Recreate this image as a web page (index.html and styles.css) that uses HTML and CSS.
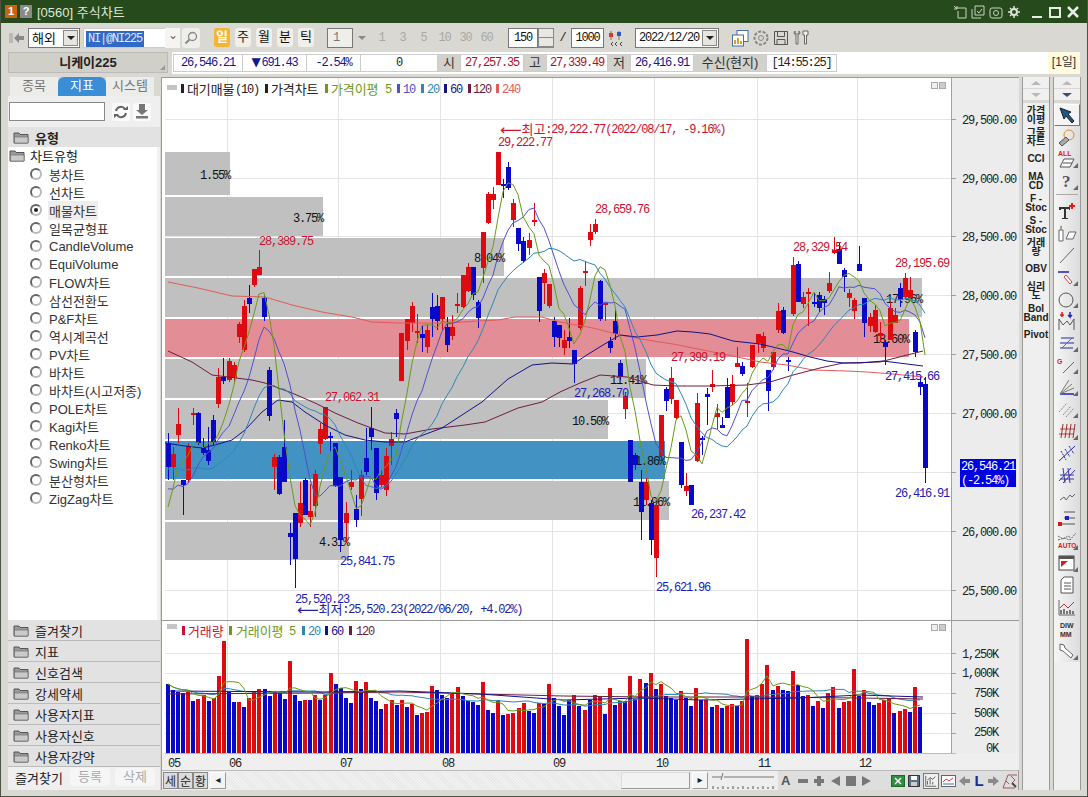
FILE: index.html
```html
<!DOCTYPE html>
<html lang="ko">
<head>
    <meta charset="UTF-8">
    <title>[0560] 주식차트</title>
    <link rel="stylesheet" href="styles.css">
</head>
<body>
    <svg class="defs" width="0" height="0">
        <symbol id="folder" viewBox="0 0 16 13">
            <path d="M1 2h5l1 1.5h8V12H1z" fill="#9a9a9a" stroke="#555"/>
            <path d="M1.5 6h13.5V12H1.500z" fill="#c9c9c9" stroke="#666" stroke-width=".6"/>
        </symbol>
    </svg>

    <div class="window">
        <div class="titlebar">
            <span class="badge badge-num">1</span>
            <span class="badge badge-help">?</span>
            <span class="title-text">[0560] 주식차트</span>
            <div class="title-icons">
                <svg width="14" height="14" viewBox="0 0 14 14"><path d="M3 3h10v10H5V6M1 1l3 3M4 1v3H1" fill="none" stroke="#c9d4c4"/></svg>
                <svg width="14" height="14" viewBox="0 0 14 14"><path d="M4 1h9v9H4zM1 4v9h9M6 6l2 2 3-4" fill="none" stroke="#c9d4c4"/></svg>
                <svg width="14" height="14" viewBox="0 0 14 14"><rect x="1" y="3" width="12" height="10" rx="2" fill="none" stroke="#c9d4c4"/><circle cx="7" cy="8" r="2.500" fill="none" stroke="#c9d4c4"/></svg>
                <svg width="14" height="14" viewBox="0 0 14 14"><circle cx="7" cy="7" r="3" fill="none" stroke="#dfe6da" stroke-width="2"/><path d="M7 1v2M7 11v2M1 7h2M11 7h2M3 3l1 1M10 10l1 1M11 3l-1 1M3 11l1-1" stroke="#dfe6da" stroke-width="1.500"/></svg>
                <span class="win-btns">
                    <svg width="14" height="14" viewBox="0 0 14 14"><path d="M2 12h10" stroke="#e8ede4" stroke-width="2"/></svg>
                    <svg width="14" height="14" viewBox="0 0 14 14"><path d="M2 3h10v9H2z" fill="none" stroke="#e8ede4" stroke-width="2"/></svg>
                    <svg width="14" height="14" viewBox="0 0 14 14"><path d="M2 2l10 10M12 2L2 12" stroke="#e8ede4" stroke-width="2.500"/></svg>
                </span>
            </div>
        </div>

        <div class="toolbar">
            <svg class="back" width="16" height="16" viewBox="0 0 16 16"><path d="M1 3v10M3 3v10" stroke="#999"/><path d="M5 8l5-5v3h5v4h-5v3z" fill="#888"/></svg>
            <div class="combo combo-market"><span>해외</span><i class="drop"></i></div>
            <div class="symbol"><span class="selected num">NI|@NI225</span></div>
            <div class="symbol-arrow">⌄</div>
            <div class="flat-btn search">
                <svg width="14" height="14" viewBox="0 0 14 14"><circle cx="8.500" cy="5.500" r="4" fill="none" stroke="#888" stroke-width="1.300"/><path d="M5.500 8.500L1.500 12.500" stroke="#888" stroke-width="2"/></svg>
            </div>
            <div class="periods">
                <span class="period on">일</span>
                <span class="period">주</span>
                <span class="period">월</span>
                <span class="period">분</span>
                <span class="period">틱</span>
            </div>
            <div class="spin-box num">1</div>
            <div class="spin-arrow"></div>
            <div class="minutes num">
                <span>1</span><span>3</span><span>5</span><span>10</span><span>30</span><span>60</span>
            </div>
            <div class="count-box num">150</div>
            <div class="count-spin"><i></i><i></i></div>
            <div class="slash num">/</div>
            <div class="total-box num">1000</div>
            <svg class="tb-icon" width="16" height="18" viewBox="0 0 16 18"><path d="M4 2v9M12 2v9" stroke="#777"/><rect x="2" y="4" width="4" height="4" fill="#d63a2a"/><rect x="10" y="3" width="4" height="4" fill="#2f55c8"/><path d="M6 13l-2 2 2 2M10 13l-2 2 2 2M15 13l-2 2 2 2" fill="none" stroke="#444"/></svg>
            <div class="combo combo-date"><span class="num">2022/12/20</span><i class="drop"></i></div>
            <svg class="tb-icon first" width="18" height="18" viewBox="0 0 18 18"><rect x="6" y="1.500" width="11" height="11" fill="#fff" stroke="#4a6fa0"/><rect x="1.500" y="6" width="11" height="11" fill="#fff" stroke="#4a6fa0"/><path d="M4 15v-4M7 15v-6M10 15v-3" stroke-width="2" stroke="#e0a020"/></svg>
            <svg class="tb-icon" width="18" height="18" viewBox="0 0 18 18"><circle cx="9" cy="9" r="6.500" fill="none" stroke="#888" stroke-width="2" stroke-dasharray="3 1.500"/><circle cx="9" cy="9" r="2.500" fill="none" stroke="#888"/></svg>
            <svg class="tb-icon" width="16" height="18" viewBox="0 0 16 18"><path d="M1.500 2.500h13v13h-13zM4.500 2.500v5h7v-5M4 15.500v-5h8v5" fill="none" stroke="#555"/></svg>
            <svg class="tb-icon" width="18" height="18" viewBox="0 0 18 18"><path d="M3 2c-2 2 0 4 1 4v9h2V6c1 0 3-2 1-4v3H3zM11 2h5v4h-1.500v9h-2V6H11z" fill="#eee" stroke="#666"/></svg>
        </div>

        <div class="infobar">
            <div class="stock-name">니케이225<i class="grip"></i></div>
            <div class="quote">
                <span class="cell num blue w-price">26,546.21</span>
                <span class="cell num blue w-diff"><b>▼</b>691.43</span>
                <span class="cell num blue w-rate">-2.54%</span>
                <span class="cell num w-vol">0</span>
                <span class="cell label w-lab">시</span>
                <span class="cell num red w-ohl">27,257.35</span>
                <span class="cell label w-lab">고</span>
                <span class="cell num red w-ohl2">27,339.49</span>
                <span class="cell label w-lab">저</span>
                <span class="cell num blue w-ohl">26,416.91</span>
                <span class="cell label w-src">수신(현지)</span>
                <span class="cell num w-time">[14:55:25]</span>
                <span class="cycle">[1일]</span>
            </div>
        </div>

        <div class="main">
            <aside class="side">
                <div class="tabs">
                    <span class="tab">종목</span>
                    <span class="tab on">지표</span>
                    <span class="tab">시스템</span>
                </div>
                <div class="search-row">
                    <div class="search-input"></div>
                    <div class="flat-btn icon-btn">
                        <svg width="16" height="14" viewBox="0 0 16 14"><path d="M3 6a5 5 0 0 1 9-2" fill="none" stroke="#666" stroke-width="2"/><path d="M13 8a5 5 0 0 1-9 2" fill="none" stroke="#666" stroke-width="2"/><path d="M10 5h5V1zM6 9H1v4z" fill="#666"/></svg>
                    </div>
                    <div class="flat-btn icon-btn">
                        <svg width="14" height="15" viewBox="0 0 14 15"><path d="M4 0h6v6h3l-6 5-6-5h3zM1 12h12v2.500H1z" fill="#777"/></svg>
                    </div>
                </div>
                <div class="group-head open"><svg width="16" height="13"><use href="#folder"/></svg><b>유형</b></div>
                <div class="tree">
                    <div class="tree-root"><svg width="16" height="13"><use href="#folder"/></svg>차트유형</div>
                    <div class="item"><i class="radio"></i><span>봉차트</span></div>
                    <div class="item"><i class="radio"></i><span>선차트</span></div>
                    <div class="item active"><i class="radio"></i><span>매물차트</span></div>
                    <div class="item"><i class="radio"></i><span>일목균형표</span></div>
                    <div class="item"><i class="radio"></i><span>CandleVolume</span></div>
                    <div class="item"><i class="radio"></i><span>EquiVolume</span></div>
                    <div class="item"><i class="radio"></i><span>FLOW차트</span></div>
                    <div class="item"><i class="radio"></i><span>삼선전환도</span></div>
                    <div class="item"><i class="radio"></i><span>P&amp;F차트</span></div>
                    <div class="item"><i class="radio"></i><span>역시계곡선</span></div>
                    <div class="item"><i class="radio"></i><span>PV차트</span></div>
                    <div class="item"><i class="radio"></i><span>바차트</span></div>
                    <div class="item"><i class="radio"></i><span>바차트(시고저종)</span></div>
                    <div class="item"><i class="radio"></i><span>POLE차트</span></div>
                    <div class="item"><i class="radio"></i><span>Kagi차트</span></div>
                    <div class="item"><i class="radio"></i><span>Renko차트</span></div>
                    <div class="item"><i class="radio"></i><span>Swing차트</span></div>
                    <div class="item"><i class="radio"></i><span>분산형차트</span></div>
                    <div class="item"><i class="radio"></i><span>ZigZag차트</span></div>
                </div>
                <div class="group-head"><svg width="16" height="13"><use href="#folder"/></svg>즐겨찾기</div>
                <div class="group-head"><svg width="16" height="13"><use href="#folder"/></svg>지표</div>
                <div class="group-head"><svg width="16" height="13"><use href="#folder"/></svg>신호검색</div>
                <div class="group-head"><svg width="16" height="13"><use href="#folder"/></svg>강세약세</div>
                <div class="group-head"><svg width="16" height="13"><use href="#folder"/></svg>사용자지표</div>
                <div class="group-head"><svg width="16" height="13"><use href="#folder"/></svg>사용자신호</div>
                <div class="group-head"><svg width="16" height="13"><use href="#folder"/></svg>사용자강약</div>
                <div class="side-foot">
                    <span class="foot-title">즐겨찾기</span>
                    <span class="foot-btn">등록</span>
                    <span class="foot-btn">삭제</span>
                </div>
            </aside>

            <section class="chart-frame">
                <svg id="price" class="pane" width="857" height="542" viewBox="162 78 857 542"></svg>
                <svg id="volume" class="pane" width="857" height="150" viewBox="162 620 857 150"></svg>
                <div class="chart-foot">
                    <span class="mini-tab">세</span><span class="mini-tab">순</span><span class="mini-tab">황</span>
                    <span class="arrow-btn">◂</span>
                    <div class="scroll-track"><div class="scroll-thumb"></div></div>
                    <span class="arrow-btn">▸</span>
                    <svg class="zoom-slider" width="64" height="18" viewBox="0 0 64 18">
                        <path d="M0 5h10M12 5h50" stroke="#777"/><path d="M11 1l-2 7" stroke="#777"/>
                        <path d="M1 17v-3M6 17v-2M11 17v-3M16 17v-2M21 17v-3M26 17v-2M31 17v-3M36 17v-2M41 17v-3M46 17v-2M51 17v-3M56 17v-2M61 17v-3" stroke="#555"/>
                    </svg>
                    <div class="foot-tools">
                        <span class="ft-a">A</span>
                        <svg width="12" height="14" viewBox="0 0 12 14"><rect x="1" y="5" width="10" height="4" fill="#777"/></svg>
                        <svg width="12" height="14" viewBox="0 0 12 14"><path d="M4 2h4v3h3v4H8v3H4V9H1V5h3z" fill="#777"/></svg>
                        <svg width="12" height="14" viewBox="0 0 12 14"><path d="M11 2v10L2 7z" fill="#777"/></svg>
                        <svg width="12" height="14" viewBox="0 0 12 14"><rect x="1" y="2" width="10" height="10" fill="#777"/></svg>
                        <svg width="12" height="14" viewBox="0 0 12 14"><path d="M1 2v10l9-5z" fill="#777"/></svg>
                        <div class="foot-views">
                            <svg width="14" height="14" viewBox="0 0 14 14"><rect x=".5" y="1.500" width="13" height="11" fill="#2f8f3f" stroke="#1c6a2a"/><path d="M4 4l6 6M10 4l-6 6" stroke="#fff" stroke-width="1.500"/></svg>
                            <svg width="14" height="14" viewBox="0 0 14 14"><path d="M1.500 1.500h11v11h-11z" fill="#5a6e8c" stroke="#333"/><rect x="4" y="2" width="6" height="4" fill="#fff"/><rect x="4" y="8" width="6" height="4" fill="#ccc"/></svg>
                            <svg class="boxed" width="16" height="16" viewBox="0 0 16 16"><path d="M2 2v12h12M4 12V8M7 12V5M10 12V9M4 7l3-3 3 2 3-3" fill="none" stroke="#555"/></svg>
                            <svg width="15" height="14" viewBox="0 0 15 14"><rect x=".5" y="1.500" width="14" height="11" fill="#fff" stroke="#666"/><path d="M2 8l3-3 3 2 4-3" fill="none" stroke="#c44"/><path d="M2 10h11" stroke="#4466bb"/></svg>
                            <svg width="13" height="14" viewBox="0 0 13 14"><path d="M7 2v3h5v4H7v3L1 7z" fill="#8a8a8a"/></svg>
                            <span class="ft-l">L</span>
                            <svg width="13" height="14" viewBox="0 0 13 14"><path d="M6 2v3H1v4h5v3l6-5z" fill="#8a8a8a"/></svg>
                            <svg width="16" height="16" viewBox="0 0 16 16"><path d="M1 15L6 2h9M1 15h12M9 3l4 4-3 3M4 8l3 3" fill="none" stroke="#a55"/><path d="M10 10l4 4" stroke="#444" stroke-width="2"/></svg>
                        </div>
                    </div>
                </div>
            </section>

            <div class="tool-col col-names">
                <div class="updown"><i class="up"></i><i class="down"></i></div>
                <div class="names">
                    <span>가격<br>이평</span>
                    <span>그물<br>차트</span>
                    <span>CCI</span>
                    <span>MA<br>CD</span>
                    <span>F -<br>Stoc</span>
                    <span>S -<br>Stoc</span>
                    <span>거래<br>량</span>
                    <span>OBV</span>
                    <span>심리<br>도</span>
                    <span>Bol<br>Band</span>
                    <span>Pivot</span>
                </div>
            </div>

            <div class="tool-col col-draw">
                <div class="updown"><i class="up"></i><i class="down dark"></i></div>
                <div class="tools">
                    <div class="tool selected"><svg width="20" height="20" viewBox="0 0 20 20"><path d="M3 3l11 4-3 2 6 7-2 2-6-7-2 3z" fill="#26527c" stroke="#123"/></svg></div>
                    <div class="tool"><svg width="20" height="20" viewBox="0 0 20 20"><circle cx="12" cy="8" r="5" fill="none" stroke="#e08a30"/><path d="M2 16l7-6 3 3-7 6z" fill="#aaa" stroke="#555"/></svg></div>
                    <div class="tool more"><svg width="20" height="20" viewBox="0 0 20 20"><text x="1" y="7" class="ico-txt red">ALL</text><path d="M3 18l4-8h10l-4 8zM6 14h9" fill="#fff" stroke="#555"/></svg></div>
                    <div class="tool more"><svg width="20" height="20" viewBox="0 0 20 20"><text x="5" y="16" class="ico-q">?</text></svg></div>
                    <div class="tool-sep"></div>
                    <div class="tool"><svg width="20" height="20" viewBox="0 0 20 20"><path d="M2 6h11v3h-1V8H9v9h2v1H5v-1h2V8H4v1H2z" fill="#333"/><path d="M12 5h6M15 2v6" stroke="#e01818" stroke-width="2"/></svg></div>
                    <div class="tool"><svg width="20" height="20" viewBox="0 0 20 20"><path d="M2 7h4v11H2zM4 7V3M9 16l3-7h7l-3 7z" fill="#fff" stroke="#666"/><path d="M3 5l1-3 1 3" fill="#d98a3a"/></svg></div>
                    <div class="tool"><svg width="20" height="20" viewBox="0 0 20 20"><path d="M3 18L17 3" stroke="#666"/></svg></div>
                    <div class="tool more"><svg width="20" height="20" viewBox="0 0 20 20"><path d="M1 5h11" stroke="#2020b0" stroke-width="1.500"/><path d="M9 8l6 7-2 2-6-7z" fill="#fff" stroke="#c44"/></svg></div>
                    <div class="tool more"><svg width="20" height="20" viewBox="0 0 20 20"><circle cx="9" cy="11" r="7" fill="none" stroke="#555"/></svg></div>
                    <div class="tool"><svg width="20" height="20" viewBox="0 0 20 20"><path d="M2 19V8l4 6 4-4 3 4 4-6v11" fill="none" stroke="#555"/><path d="M5 1v5M3 4h4" stroke="#e01818" stroke-width="1.500"/><path d="M13 1v5l-2-2M13 6l2-2" fill="none" stroke="#2020c8" stroke-width="1.500"/></svg></div>
                    <div class="tool more"><svg width="20" height="20" viewBox="0 0 20 20"><path d="M4 5h13M3 15h13M3 10h14" stroke="#2828a8"/><path d="M5 15L15 5" stroke="#c44"/></svg></div>
                    <div class="tool more"><svg width="20" height="20" viewBox="0 0 20 20"><text x="0" y="9" class="ico-txt red">G</text><path d="M6 18L17 7" stroke="#666"/></svg></div>
                    <div class="tool more"><svg width="20" height="20" viewBox="0 0 20 20"><path d="M3 17h14" stroke="#2020b0" stroke-width="1.500"/><path d="M3 17L12 3M3 17L15 7M3 17L17 11" stroke="#777"/></svg></div>
                    <div class="tool more"><svg width="20" height="20" viewBox="0 0 20 20"><path d="M2 13L10 4M6 16l8-9M9 18l8-9" stroke="#888" stroke-dasharray="2 1"/></svg></div>
                    <div class="tool more"><svg width="20" height="20" viewBox="0 0 20 20"><path d="M3 8h15M2 13h15" stroke="#c04040"/><path d="M4 17L6 3M8 17l2-14M12 17l2-14M16 17l2-14" stroke="#a03030"/></svg></div>
                    <div class="tool"><svg width="20" height="20" viewBox="0 0 20 20"><path d="M2 18L18 3" stroke="#2828a8"/><path d="M4 8l5 9M8 6l5 8M12 3l5 8" stroke="#2828a8" stroke-dasharray="2 1"/></svg></div>
                    <div class="tool"><svg width="20" height="20" viewBox="0 0 20 20"><path d="M2 16L14 3M6 18L18 5M3 10h14M3 14h14M6 3l2 15M11 3l2 15" stroke="#3838a8" fill="none"/></svg></div>
                    <div class="tool"><svg width="20" height="20" viewBox="0 0 20 20"><path d="M3 13l4-3 2 3 4-5 2 2 3-3" fill="none" stroke="#666"/></svg></div>
                    <div class="tool"><svg width="20" height="20" viewBox="0 0 20 20"><path d="M7 3h11M7 9h11M2 15h16" stroke="#555"/><rect x="8" y="7" width="4" height="4" fill="#2020c8"/><rect x="1" y="13" width="4" height="4" fill="#d81818"/></svg></div>
                    <div class="tool more"><svg width="20" height="20" viewBox="0 0 20 20"><path d="M1 9l6-2 6 2 6-7M1 5l5 3 5-3 3 2" fill="none" stroke="#666" stroke-dasharray="2 1"/><text x="1" y="17" class="ico-auto">AUTO</text></svg></div>
                    <div class="tool more"><svg width="20" height="20" viewBox="0 0 20 20"><rect x="2" y="3" width="15" height="14" fill="#fff" stroke="#444"/><rect x="2" y="3" width="15" height="3" fill="#555"/><path d="M4 8h7l-7 6z" fill="#e01818"/></svg></div>
                    <div class="tool"><svg width="20" height="20" viewBox="0 0 20 20"><path d="M4 5l3-3h9v16H4zM7 8h7M7 11h7M7 14h7" fill="#fff" stroke="#555"/></svg></div>
                    <div class="tool"><svg width="20" height="20" viewBox="0 0 20 20"><path d="M2 3v15h16" fill="none" stroke="#666"/><path d="M4 17v-4M7 17v-5M10 17v-3M13 17v-4M16 17v-3" stroke="#777" stroke-width="2"/><path d="M3 11l4-4 4 4 6-6" fill="none" stroke="#c03030"/></svg></div>
                    <div class="tool"><svg width="20" height="20" viewBox="0 0 20 20"><text x="3" y="9" class="ico-txt dark">DIW</text><text x="3" y="18" class="ico-txt dark">MM</text></svg></div>
                    <div class="tool more"><svg width="20" height="20" viewBox="0 0 20 20"><path d="M3 3l4 1 1 3 8 7-2 3-8-7-3-1z" fill="#fff" stroke="#666"/></svg></div>
                </div>
            </div>
        </div>
    </div>

    <script src="chart.js"></script>
</body>
</html>
```
FILE: styles.css
```css
* { box-sizing: border-box; }

html, body {
    margin: 0;
    padding: 0;
    background: #d9d8d2;
}

body {
    font-family: "Liberation Sans", "Noto Sans CJK KR", sans-serif;
    font-size: 12px;
    color: #222;
}

i { font-style: normal; }
.defs { position: absolute; }

.num {
    font-family: "Liberation Mono", "Noto Sans CJK KR", monospace;
    font-size: 12px;
    letter-spacing: -1.2px;
}
.blue { color: #14148c; }
.red { color: #a8102c; }

.window {
    width: 1088px;
    height: 797px;
    overflow: hidden;
    border: 1px solid #4a5548;
    border-top: 0;
    background: #d9d8d2;
    display: flex;
    flex-direction: column;
}

/* title bar */
.titlebar {
    height: 23px;
    flex: none;
    display: flex;
    align-items: center;
    padding-left: 4px;
    background: #264a1c;
    color: #e8ece4;
}
.badge {
    width: 12px;
    height: 13px;
    margin-right: 3px;
    font: bold 11px "Liberation Sans", sans-serif;
    text-align: center;
    line-height: 13px;
    color: #fff;
}
.badge-num { background: #c8640a; }
.badge-help { background: #8a8a8a; }
.title-text {
    margin-left: 2px;
    font-size: 13px;
    color: #dfe6da;
}
.title-icons {
    margin-left: auto;
    display: flex;
    align-items: center;
    gap: 4px;
    padding-right: 7px;
}
.win-btns {
    display: flex;
    gap: 4px;
    margin-left: 5px;
}

/* toolbar */
.toolbar {
    height: 29px;
    flex: none;
    display: flex;
    align-items: center;
    padding-left: 8px;
    font-size: 12px;
}
.combo {
    height: 20px;
    display: flex;
    align-items: center;
    justify-content: space-between;
    background: #fff;
    border: 1px solid #777;
    padding-left: 3px;
    font-size: 13px;
    color: #111;
}
.combo-market { width: 52px; margin-left: 3px; }
.combo-date { width: 84px; margin-left: 12px; }
.drop {
    width: 15px;
    height: 16px;
    margin-right: 1px;
    background: #e6e5df;
    border: 1px solid #888;
    display: flex;
    align-items: center;
    justify-content: center;
}
.drop::after {
    content: "";
    border: 4px solid transparent;
    border-top: 4px solid #222;
    border-bottom: 0;
}
.symbol {
    width: 82px;
    height: 20px;
    margin-left: 3px;
    background: #fff;
    border: 1px solid #ccc;
    border-right: 0;
    padding: 2px 0 0 2px;
}
.selected {
    background: #3169c6;
    color: #dfe8ff;
    padding: 1px 2px;
}
.symbol-arrow {
    width: 15px;
    height: 20px;
    background: #f4f4f2;
    color: #666;
    text-align: center;
    line-height: 14px;
}
.flat-btn {
    display: flex;
    align-items: center;
    justify-content: center;
    background: #eeeeea;
    border-radius: 3px;
}
.search { width: 18px; height: 20px; margin-left: 2px; }
.periods {
    display: flex;
    gap: 5px;
    margin-left: 14px;
}
.period {
    width: 16px;
    height: 19px;
    border-radius: 3px;
    background: #f0efea;
    text-align: center;
    font-size: 13px;
    line-height: 18px;
    color: #111;
}
.period.on {
    background: #f5b52e;
    color: #fff;
    font-weight: bold;
}
.spin-box {
    width: 26px;
    height: 20px;
    margin-left: 13px;
    background: #efefe9;
    border: 1px solid #777;
    padding-left: 5px;
    line-height: 18px;
    color: #777;
}
.spin-arrow {
    width: 14px;
    height: 20px;
    margin-left: 2px;
    display: flex;
    align-items: center;
    justify-content: center;
}
.spin-arrow::after {
    content: "";
    border: 4px solid transparent;
    border-top: 4px solid #888;
    border-bottom: 0;
}
.minutes {
    display: flex;
    margin-left: 2px;
    color: #a9a9a4;
}
.minutes span {
    width: 21px;
    text-align: center;
}
.count-box, .total-box {
    height: 20px;
    background: #fff;
    border: 1px solid #777;
    text-align: center;
    line-height: 18px;
    color: #111;
}
.count-box { width: 30px; margin-left: 11px; }
.total-box { width: 33px; }
.count-spin {
    width: 16px;
    height: 20px;
    display: flex;
    flex-direction: column;
    border: 1px solid #888;
}
.count-spin i {
    flex: 1;
    background: #e8e7e1;
    border-bottom: 1px solid #888;
}
.slash {
    width: 17px;
    text-align: center;
}
.tb-icon { margin-left: 3px; flex: none; }
.tb-icon.first { margin-left: 12px; }
.back { flex: none; }

/* quote strip */
.infobar {
    height: 25px;
    flex: none;
    display: flex;
    padding-left: 7px;
    padding-right: 7px;
}
.stock-name {
    width: 160px;
    height: 21px;
    background: #d0cfc8;
    border: 1px solid #bbb;
    font-weight: bold;
    font-size: 13px;
    text-align: center;
    line-height: 19px;
    position: relative;
}
.grip {
    position: absolute;
    right: 2px;
    bottom: 2px;
    border-left: 5px solid transparent;
    border-bottom: 5px solid #999;
}
.quote {
    flex: 1;
    margin-left: 4px;
    height: 22px;
    background: #fff;
    display: flex;
    align-items: center;
    padding-left: 1px;
}
.cell {
    height: 18px;
    border: 1px solid #ccc;
    border-left: 0;
    text-align: center;
    line-height: 16px;
    background: #fff;
}
.cell:first-child { border-left: 1px solid #ccc; }
.cell b {
    font: normal 12px "DejaVu Sans", sans-serif;
    letter-spacing: 0;
    margin-right: 1px;
}
.cell.label {
    background: #d2d1cb;
    font-size: 13px;
    color: #333;
}
.w-price { width: 70px; }
.w-diff { width: 64px; }
.w-rate { width: 54px; }
.w-vol { width: 77px; }
.w-lab { width: 23px; }
.w-ohl { width: 63px; }
.w-ohl2 { width: 61px; }
.w-src { width: 73px; }
.w-time { width: 70px; }
.cycle {
    margin-left: auto;
    width: 32px;
    height: 22px;
    background: #fffbe0;
    text-align: center;
    line-height: 20px;
    color: #333;
}

/* body of the window */
.main {
    flex: 1;
    min-height: 0;
    display: flex;
    padding: 0 0 6px 7px;
}

/* left panel */
.side {
    width: 152px;
    flex: none;
    display: flex;
    flex-direction: column;
}
.tabs {
    display: flex;
    height: 19px;
    padding-left: 2px;
}
.tab {
    width: 48px;
    text-align: center;
    line-height: 18px;
    background: #ececea;
    color: #777;
    font-size: 13px;
}
.tab.on {
    background: #3a8ed8;
    color: #fff;
    border-radius: 6px 6px 0 0;
}
.search-row {
    height: 31px;
    display: flex;
    align-items: center;
    padding-left: 1px;
    background: #efefef;
}
.search-input {
    width: 96px;
    height: 19px;
    background: #fff;
    border: 1px solid #888;
}
.icon-btn {
    width: 18px;
    height: 18px;
    margin-left: 7px;
    background: #fafafa;
}
.icon-btn + .icon-btn { margin-left: 3px; }
.group-head {
    height: 21px;
    flex: none;
    display: flex;
    align-items: center;
    gap: 6px;
    padding-left: 5px;
    background: #e2e2e2;
    border-bottom: 1px solid #bbb;
    font-size: 13px;
}
.group-head.open { height: 20px; border-bottom: 0; }
.tree {
    flex: 1;
    min-height: 0;
    padding-left: 1px;
    background: #fff;
    border-right: 3px solid #f2f2f2;
}
.tree-root {
    height: 18px;
    display: flex;
    align-items: center;
    gap: 5px;
    font-size: 13px;
    margin-top: -1px;
    margin-bottom: 1px;
}
.item {
    height: 18px;
    display: flex;
    align-items: center;
    padding-left: 21px;
    font-size: 13px;
    color: #333;
}
.item span { margin-left: 6px; padding: 0 1px; }
.item.active span { background: #eeeeee; }
.radio {
    width: 12px;
    height: 12px;
    border-radius: 50%;
    border: 2px solid #666;
    border-right-color: #bbb;
    border-bottom-color: #bbb;
    background: #fff;
    position: relative;
}
.item.active .radio::after {
    content: "";
    position: absolute;
    left: 2px;
    top: 2px;
    width: 4px;
    height: 4px;
    border-radius: 50%;
    background: #222;
}
.side-foot {
    height: 23px;
    flex: none;
    display: flex;
    align-items: center;
    padding: 0 0 3px 7px;
    background: #efefef;
    font-size: 13px;
}
.foot-title { width: 55px; }
.foot-btn {
    width: 40px;
    height: 18px;
    margin-right: 5px;
    border-radius: 4px;
    background: #f6f6f6;
    color: #aaa;
    text-align: center;
    line-height: 17px;
}

/* chart */
.chart-frame {
    width: 858px;
    flex: none;
    margin-left: 1px;
    border: 1px solid #9a9a9a;
    background: #fff;
    display: flex;
    flex-direction: column;
}
.pane {
    display: block;
    flex: none;
    font-family: "Liberation Mono", "Noto Sans CJK KR", monospace;
    font-size: 12px;
}
.n { letter-spacing: -1.2px; }
.ko {
    font-family: "Noto Sans CJK KR", sans-serif;
    font-size: 13px;
    letter-spacing: -.1px;
}
.mark { font-family: "DejaVu Sans", sans-serif; }
.chart-foot {
    flex: 1;
    display: flex;
    align-items: center;
    background: #eeeeee;
    border-top: 1px solid #bbb;
    padding-left: 1px;
}
.mini-tab {
    flex: none;
    width: 15px;
    height: 17px;
    background: #dcdcdc;
    border: 1px solid #888;
    text-align: center;
    line-height: 15px;
    overflow: hidden;
    font-family: "Noto Sans CJK KR", sans-serif;
    font-size: 12px;
}
.arrow-btn {
    flex: none;
    width: 16px;
    height: 17px;
    margin-left: 2px;
    background: #f4f4f4;
    border: 1px solid #999;
    border-top-color: #fff;
    border-left-color: #fff;
    text-align: center;
    line-height: 14px;
    font-size: 10px;
    font-family: "DejaVu Sans", sans-serif;
}
.scroll-track {
    flex: none;
    width: 464px;
    height: 17px;
    display: flex;
    justify-content: flex-end;
    background: repeating-linear-gradient(45deg, #f2f2f2, #f2f2f2 1px, #e8e8e8 1px, #e8e8e8 2px);
}
.scroll-thumb {
    width: 69px;
    background: #f2f2f2;
    border: 1px solid #999;
    border-top-color: #ddd;
    border-left-color: #ddd;
}
.zoom-slider { margin-left: 4px; flex: none; }
.foot-tools {
    flex: 1;
    height: 19px;
    margin-left: 2px;
    display: flex;
    align-items: center;
    gap: 4px;
    padding-left: 3px;
    background: #dedede;
}
.ft-a {
    width: 12px;
    font: bold 13px "Liberation Sans", sans-serif;
    color: #555;
}
.ft-l {
    width: 12px;
    font: bold 15px "Liberation Sans", sans-serif;
    color: #1c2f8c;
    text-align: center;
}
.foot-views {
    display: flex;
    align-items: center;
    gap: 2px;
    margin-left: 14px;
}
.foot-views svg { flex: none; }
.foot-views .boxed { border: 1px solid #777; background: #f0f0f0; }

/* tool columns on the right */
.tool-col {
    width: 28px;
    flex: none;
    margin-left: 3px;
    display: flex;
    flex-direction: column;
    border-left: 1px solid #9a9a9a;
    border-right: 1px solid #9a9a9a;
    background: #efefef;
}
.updown {
    height: 26px;
    flex: none;
    display: flex;
    flex-direction: column;
    gap: 1px;
    background: #d9d8d2;
    padding-bottom: 3px;
}
.updown i {
    flex: 1;
    display: flex;
    align-items: center;
    justify-content: center;
    background: #f0f0f0;
}
.updown .up::after {
    content: "";
    border: 5px solid transparent;
    border-bottom: 4px solid #b9b9b9;
    border-top: 0;
}
.updown .down::after {
    content: "";
    border: 5px solid transparent;
    border-top: 4px solid #b9b9b9;
    border-bottom: 0;
}
.updown .down.dark::after { border-top-color: #3d4f6b; }
.names {
    display: flex;
    flex-direction: column;
    padding-top: 1px;
}
.names span {
    height: 22px;
    display: flex;
    align-items: center;
    justify-content: center;
    text-align: center;
    font: bold 10px/9.500px "Liberation Sans", "Noto Sans CJK KR", sans-serif;
    color: #222;
}
.tools {
    display: flex;
    flex-direction: column;
    background: linear-gradient(90deg, #f6f6f6, #dcdcdc);
    padding-top: 1px;
}
.tool {
    height: 22px;
    flex: none;
    display: flex;
    align-items: center;
    justify-content: center;
    position: relative;
}
.tool.selected {
    background: #f4f4f4;
    border: 1px solid #777;
    border-top-color: #fff;
    border-left-color: #fff;
}
.tool.more::after {
    content: "";
    position: absolute;
    right: 2px;
    bottom: 2px;
    border-left: 5px solid transparent;
    border-bottom: 5px solid #666;
}
.tool-sep {
    height: 6px;
    flex: none;
    margin: 2px 2px 0;
    border-top: 1px solid #aaa;
}
.ico-txt { font: bold 7px "Liberation Sans", sans-serif; }
.ico-txt.red, .ico-auto { fill: #e01818; }
.ico-txt.dark { fill: #333; }
.ico-auto { font: bold 6.500px "Liberation Sans", sans-serif; }
.ico-q { font: bold 17px "Liberation Serif", serif; fill: #555; }
```
FILE: chart.js
```js
// Candles in screen pixels: x, high, low, body top, body bottom, colour
const candles = [
    [168,433,480,443,467,'b'],[173,447,480,454,467,'r'],[178,408,443,424,435,'r'],[183,480,515,480,485,'b'],
    [188,443,483,446,480,'r'],[193,408,425,413,415,'r'],[198,412,445,413,443,'b'],[203,438,455,448,453,'b'],
    [208,427,465,450,461,'b'],[213,415,445,420,442,'b'],[218,368,408,377,404,'r'],[223,358,384,377,381,'b'],
    [229,358,382,361,380,'r'],[234,362,382,365,378,'r'],[239,322,343,324,337,'r'],[244,300,352,306,350,'r'],
    [249,285,313,298,304,'b'],[254,269,287,269,285,'r'],[259,250,275,267,275,'r'],[264,295,321,298,317,'b'],
    [269,367,421,370,416,'b'],[274,454,490,457,467,'r'],[279,455,495,457,494,'b'],[284,420,482,447,482,'b'],
    [290,523,565,533,537,'b'],[295,513,588,513,559,'b'],[300,482,527,503,523,'r'],[305,478,515,480,515,'b'],
    [310,484,527,511,517,'r'],[315,470,517,474,506,'r'],[320,423,454,429,444,'r'],[325,407,440,407,439,'r'],
    [330,432,452,436,438,'b'],[335,443,487,443,486,'b'],[340,477,552,477,540,'b'],[346,502,543,513,523,'r'],
    [351,470,490,482,487,'r'],[356,495,527,509,520,'b'],[361,470,516,475,499,'r'],[366,428,475,458,472,'b'],
    [371,407,450,428,437,'b'],[376,448,500,448,493,'b'],[381,470,487,475,485,'r'],[386,448,496,456,490,'r'],
    [391,432,465,439,446,'r'],[396,409,437,413,419,'b'],[401,333,381,333,381,'r'],[407,319,350,319,341,'r'],
    [412,302,332,306,323,'r'],[417,314,343,331,333,'r'],[422,325,352,334,338,'b'],[427,325,353,330,347,'r'],
    [432,293,337,307,319,'b'],[437,295,330,306,321,'b'],[442,297,330,297,319,'r'],[447,317,352,327,345,'b'],
    [452,315,340,327,336,'r'],[457,293,313,304,306,'r'],[463,275,308,275,307,'r'],[468,263,292,267,291,'r'],
    [473,267,300,267,295,'b'],[478,300,328,302,318,'b'],[483,232,283,232,268,'r'],[488,192,224,194,223,'r'],
    [493,187,209,194,200,'r'],[498,152,185,152,185,'r'],[503,179,198,184,186,'b'],[508,162,190,167,188,'b'],
    [513,199,227,203,220,'r'],[518,228,251,228,244,'b'],[523,237,263,241,261,'b'],[529,233,255,240,248,'r'],
    [534,203,226,220,222,'r'],[539,277,322,277,311,'b'],[544,269,304,273,283,'r'],[549,284,308,284,306,'r'],
    [554,317,347,321,337,'b'],[559,325,347,325,338,'b'],[564,330,355,340,348,'r'],[569,318,348,337,341,'b'],
    [574,350,383,350,364,'b'],[580,286,330,288,328,'r'],[585,262,286,271,273,'r'],[590,224,246,232,240,'r'],
    [595,219,234,224,232,'r'],[600,280,321,281,319,'b'],[605,303,321,303,305,'r'],[610,337,353,341,348,'b'],
    [615,310,340,321,334,'b'],[620,360,380,363,377,'b'],[625,392,419,396,409,'r'],[630,440,482,440,482,'b'],
    [635,453,470,455,465,'b'],[641,470,540,482,512,'b'],[646,478,505,482,500,'r'],[651,500,555,503,540,'b'],
    [656,505,577,505,558,'r'],[661,415,457,415,456,'r'],[666,387,411,389,401,'b'],[671,367,404,378,399,'r'],
    [676,400,420,400,418,'r'],[681,442,488,442,485,'b'],[686,473,496,486,491,'r'],[691,485,505,485,505,'b'],
    [697,393,462,403,461,'r'],[702,436,455,438,440,'b'],[707,388,425,394,397,'b'],[712,370,392,384,387,'r'],
    [717,404,429,413,417,'r'],[722,417,428,425,428,'b'],[727,378,418,387,418,'b'],[732,375,405,384,402,'r'],
    [737,347,367,363,367,'r'],[742,362,376,366,374,'b'],[747,383,417,401,403,'r'],[752,345,368,345,367,'r'],
    [758,334,353,334,343,'r'],[763,332,352,336,348,'r'],[768,370,411,370,391,'b'],[773,352,370,352,367,'r'],
    [778,303,333,311,330,'r'],[783,307,334,310,333,'b'],[788,357,371,360,362,'b'],[793,257,316,265,314,'r'],
    [798,261,302,264,302,'b'],[803,292,308,297,304,'r'],[808,288,326,292,294,'r'],[814,293,307,302,304,'b'],
    [819,292,312,295,308,'b'],[824,296,315,299,303,'b'],[829,272,293,283,291,'r'],[834,237,254,250,253,'r'],
    [839,243,264,249,264,'b'],[844,268,292,270,277,'b'],[849,289,307,293,298,'r'],[854,298,319,300,311,'r'],
    [859,246,271,264,271,'b'],[864,298,337,298,323,'b'],[870,313,332,317,326,'r'],[875,305,333,310,332,'r'],
    [880,322,342,333,336,'r'],[885,340,365,342,347,'b'],[890,302,340,308,340,'r'],[895,308,323,315,323,'r'],
    [900,283,307,288,300,'b'],[905,273,298,278,297,'r'],[910,277,300,290,298,'r'],[915,330,357,332,352,'b'],
    [920,377,395,382,387,'b'],[925,377,483,384,468,'b']
];

// Closes before the first candle, so the short averages start at the left edge
const history = [445,450,440,455,450,445,440,450,460,455,450,465,470,478,490,548,535,505,480];

const ma60 = [[165,443],[185,446],[202,448],[215,445],[232,440],[245,430],[262,412],[278,400],[292,402],[305,412],[325,425],[345,435],[365,440],[385,442],[405,442],[418,437],[442,428],[482,402],[508,379],[532,365],[552,363],[573,364],[590,353],[603,345],[620,335],[637,337],[657,335],[677,331],[693,332],[710,334],[733,341],[760,344],[777,348],[793,352],[810,357],[827,361],[843,363],[860,363],[883,361],[907,364],[923,366]];
const ma120 = [[168,351],[192,362],[212,375],[252,380],[265,383],[292,393],[315,403],[335,413],[358,423],[385,433],[405,434],[432,429],[465,425],[485,422],[518,408],[542,402],[560,392],[580,383],[600,375],[627,377],[653,385],[677,386],[710,386],[747,385],[770,382],[793,375],[820,368],[843,363],[880,362],[907,355],[923,351]];
const ma240 = [[168,282],[198,288],[232,296],[265,297],[292,305],[322,312],[352,317],[372,322],[398,323],[425,323],[448,323],[478,321],[498,320],[515,317],[542,317],[560,322],[593,328],[620,335],[647,340],[673,344],[703,350],[733,356],[760,362],[787,365],[813,370],[847,371],[867,372],[893,374],[923,377]];

// Volume profile rows: top, bottom, right edge, label, colour
const profile = [
    [152,195,230,'1.55%','#c0c0c0'],[197,236,323,'3.75%','#c0c0c0'],[238,276,504,'8.04%','#c0c0c0'],
    [278,317,922,'17.96%','#c0c0c0'],[319,357,909,'18.60%','#e38d96'],[359,398,646,'11.41%','#c0c0c0'],
    [400,439,608,'10.50%','#c0c0c0'],[441,479,665,'11.86%','#4292c4'],[481,520,669,'11.96%','#c0c0c0'],
    [522,560,349,'4.31%','#c0c0c0']
];

const priceTicks = [[119,'29,500.00'],[178,'29,000.00'],[236,'28,500.00'],[295,'28,000.00'],[354,'27,500.00'],[413,'27,000.00'],[531,'26,000.00'],[590,'25,500.00']];
const months = [[227,229,'06'],[338,340,'07'],[440,442,'08'],[552,553,'09'],[654,656,'10'],[757,758,'11'],[857,859,'12']];

const RED = '#cc1030';
const NAVY = '#2020b8';
const peakLabels = [
    [259,240,'28,389.75',RED],[498,141,'29,222.77',RED],[595,208,'28,659.76',RED],[793,246,'28,329.54',RED],
    [895,262,'28,195.69',RED],[671,356,'27,399.19',RED],[325,396,'27,062.31',RED],[574,392,'27,268.70',NAVY],
    [885,375,'27,415.66',NAVY],[340,560,'25,841.75',NAVY],[295,598,'25,520.23',NAVY],[691,513,'26,237.42',NAVY],
    [656,586,'25,621.96',NAVY],[895,492,'26,416.91',NAVY]
];

// Top of each volume bar, read off the 3x crop (y = 620 + value / 3)
const volTops = [
    192,210,217,218,215,243,237,225,243,235,168,62,216,246,246,261,234,212,207,207,228,215,218,237,123,225,243,240,240,225,
    240,225,159,192,205,234,249,183,207,186,234,243,267,252,240,254,240,261,252,285,279,276,198,210,225,234,219,201,228,243,
    246,255,186,270,279,240,285,282,279,264,249,273,279,249,252,192,235,258,285,240,225,258,270,240,225,
    228,282,204,255,243,243,168,237,177,189,159,207,192,228,234,240,213,234,258,204,240,240,261,255,264,258,252,258,243,57,
    228,225,192,135,210,198,210,213,153,196,228,225,258,243,264,219,201,264,246,243,147,228,210,246,255,249,240,234,279,273,
    267,276,201,261
];
const volColors = 'bbbbrbrrbrrrbbrbrrrbbrbbrbbrbrbrrbbbbrbrbbbrrbrbrbrrrbbbrrbbbbrbbrbrrrrbbrbrbbb' +
    'brbrbr' +
    'rbrbrbrbrbrbrbbbrbbrbrbrbrrbrrbrrrbrbbrbbrbrbrrbrrrbrbbrrrbrrbrb';
const vol60 = [[168,691],[320,692],[400,691],[480,694],[564,700],[640,698],[700,700],[800,698],[860,695],[923,697]];
const vol120 = [[168,694],[320,693],[400,692],[480,694],[564,696],[650,697],[760,697],[860,698],[923,699]];

function rect(x, y, w, h, fill) {
    return `<rect x="${x}" y="${y}" width="${w}" height="${Math.max(h, 1)}" fill="${fill}" shape-rendering="crispEdges"/>`;
}

function line(x1, y1, x2, y2, color) {
    return `<line x1="${x1}" y1="${y1}" x2="${x2}" y2="${y2}" stroke="${color}" shape-rendering="crispEdges"/>`;
}

function poly(points, color, width) {
    const d = points.map(p => p[0] + ',' + p[1].toFixed(1)).join(' ');
    return `<polyline points="${d}" fill="none" stroke="${color}" stroke-width="${width}"/>`;
}

function label(x, y, str, fill, anchor) {
    return `<text x="${x}" y="${y + 2}" class="n" fill="${fill}" dominant-baseline="middle" text-anchor="${anchor || 'start'}">${str}</text>`;
}

function korean(x, y, str, fill) {
    return `<text x="${x}" y="${y + 1}" class="ko" fill="${fill}" dominant-baseline="middle">${str}</text>`;
}

// Simple moving average over the previous n values
function average(values, n) {
    return values.map((v, i) => {
        const part = values.slice(Math.max(0, i - n + 1), i + 1);
        return part.reduce((a, b) => a + b, 0) / part.length;
    });
}

function priceAverage(n) {
    const closes = history.concat(candles.map(c => c[5] === 'r' ? c[3] : c[4]));
    const avg = average(closes, n).slice(history.length);
    return candles.map((c, i) => [c[0], avg[i]]);
}

function drawPrice() {
    let s = rect(951, 78, 68, 542, '#ececec') + line(951, 78, 951, 620, '#a0a0a0');

    // grid
    priceTicks.concat([[472,'']]).forEach(t => {
        s += line(165, t[0], 951, t[0], '#e4e4e4') + line(951, t[0], 956, t[0], '#a0a0a0');
    });
    months.forEach(m => { s += line(m[0], 78, m[0], 620, '#e4e4e4'); });

    profile.forEach(p => {
        s += rect(165, p[0], p[2] - 165, p[1] - p[0], p[4]);
        s += label(p[2], (p[0] + p[1]) / 2, p[3], '#111', 'end');
    });

    candles.forEach(c => {
        const fill = c[5] === 'r' ? '#dd0a10' : '#0808c8';
        s += rect(c[0], c[1], 1, c[2] - c[1], fill);
        s += rect(c[0] - 2, c[3], 5, c[4] - c[3], fill);
    });

    s += poly(ma240, '#e25a5a', 1);
    s += poly(ma120, '#6e1c40', 1);
    s += poly(ma60, '#12128c', 1);
    s += poly(priceAverage(20), '#2e87b8', 1);
    s += poly(priceAverage(10), '#5050d0', 1);
    s += poly(priceAverage(5), '#6a9a18', 1);

    peakLabels.forEach(l => { s += label(l[0], l[1], l[2], l[3]); });

    s += `<text x="500" y="130" dominant-baseline="middle" fill="${RED}"><tspan class="mark" font-size="15">⟵</tspan><tspan class="ko">최고</tspan><tspan class="n">:29,222.77(2022/08/17, -9.16%)</tspan></text>`;
    s += `<text x="297" y="610" dominant-baseline="middle" fill="#2020a0"><tspan class="mark" font-size="15">⟵</tspan><tspan class="ko">최저</tspan><tspan class="n">:25,520.23(2022/06/20, +4.02%)</tspan></text>`;

    priceTicks.forEach(t => { s += label(962, t[0], t[1], '#222'); });

    // current price flag
    s += rect(960, 459, 56, 28, '#0000e0');
    s += label(961, 465, '26,546.21', '#fff') + label(961, 479, '(-2.54%)', '#fff');

    s += legend();
    s += paneButtons(85);
    return s;
}

function swatch(x, y, color) {
    return rect(x, y - 5, 3, 9, color);
}

function legend() {
    let s = rect(167, 85, 10, 5, '#c4c4c4');
    s += swatch(181, 89, '#222') + korean(187, 89, '대기매물', '#222') + label(235, 88, '(10)', '#222');
    s += swatch(265, 89, '#222') + korean(271, 89, '가격차트', '#222');
    s += swatch(325, 89, '#6a9a18') + korean(331, 89, '가격이평', '#6a9a18') + label(385, 88, '5', '#6a9a18');
    s += swatch(397, 89, '#5050d0') + label(403, 88, '10', '#5050d0');
    s += swatch(421, 89, '#2e87b8') + label(427, 88, '20', '#2e87b8');
    s += swatch(444, 89, '#12128c') + label(450, 88, '60', '#12128c');
    s += swatch(468, 89, '#6e1c40') + label(473, 88, '120', '#6e1c40');
    s += swatch(496, 89, '#e25a5a') + label(502, 88, '240', '#e25a5a');
    return s;
}

// little minimise / close squares in the corner of each pane
function paneButtons(y) {
    return `<rect x="931.5" y="${y - 2.5}" width="6" height="6" fill="#eee" stroke="#aaa"/><rect x="939.500" y="${y - 2.500}" width="6" height="6" fill="#ccc" stroke="#aaa"/>`;
}

function barX(i) {
    return Math.round(168 + i * 5.08);
}

function drawVolume() {
    let s = rect(951, 620, 68, 133, '#ececec') + rect(162, 753, 857, 17, '#efefef');
    s += line(162, 620, 1019, 620, '#999');
    s += line(951, 621, 951, 753, '#a0a0a0') + line(165, 753, 956, 753, '#bbb');

    [653, 673, 693, 713, 733].forEach(y => {
        s += line(165, y, 951, y, '#e4e4e4') + line(951, y, 956, y, '#a0a0a0');
    });
    months.forEach(m => { s += line(m[0], 621, m[0], 758, '#e4e4e4'); });

    const tops = volTops.map(z => 620 + z / 3);
    tops.forEach((y, i) => {
        const fill = volColors[i] === 'r' ? '#dd0a10' : '#0808c8';
        s += rect(barX(i) - 2, Math.round(y), 4, 753 - Math.round(y), fill);
    });

    const series = n => average(tops, n).map((v, i) => [barX(i), v]);
    s += poly(series(20), '#2e87b8', 1);
    s += poly(vol120, '#6e1c40', 1);
    s += poly(vol60, '#12128c', 1);
    s += poly(series(5), '#6a9a18', 1);

    [[653,'1,250K'],[672,'1,000K'],[692,'750K'],[712,'500K'],[731,'250K'],[747,'0K']].forEach(t => {
        s += label(998, t[0], t[1], '#222', 'end');
    });

    s += rect(167, 624, 10, 5, '#c4c4c4');
    s += swatch(182, 631, '#cc1030') + korean(188, 631, '거래량', '#cc1030');
    s += swatch(229, 631, '#6a9a18') + korean(236, 631, '거래이평', '#6a9a18') + label(289, 630, '5', '#6a9a18');
    s += swatch(302, 631, '#2e87b8') + label(308, 630, '20', '#2e87b8');
    s += swatch(325, 631, '#12128c') + label(331, 630, '60', '#12128c');
    s += swatch(349, 631, '#6e1c40') + label(356, 630, '120', '#6e1c40');

    s += label(168, 762, '05', '#222');
    months.forEach(m => { s += label(m[1], 762, m[2], '#222'); });
    s += paneButtons(627);
    return s;
}

document.getElementById('price').innerHTML = drawPrice();
document.getElementById('volume').innerHTML = drawVolume();
```
